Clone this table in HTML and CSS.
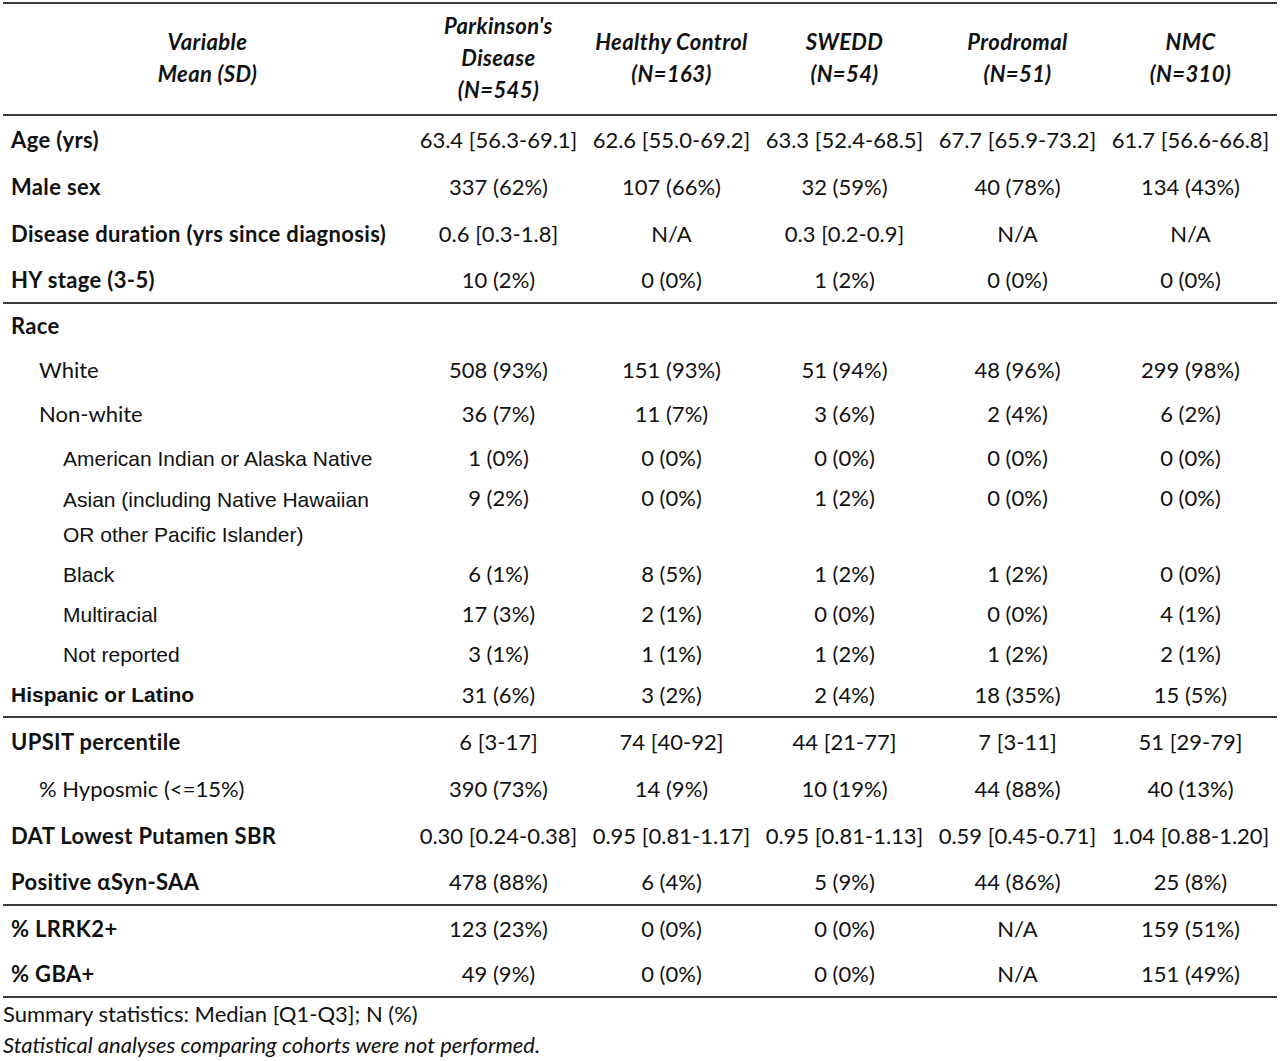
FILE: index.html
```html
<!DOCTYPE html>
<html lang="en">
<head>
    <meta charset="UTF-8">
    <meta name="viewport" content="width=device-width, initial-scale=1.0">
    <title>Cohort characteristics</title>
    <link rel="stylesheet" href="styles.css">
</head>
<body>

<table class="cohort-table">
    <colgroup>
        <col class="col-var">
        <col class="col-data">
        <col class="col-data">
        <col class="col-data">
        <col class="col-data">
        <col class="col-data">
    </colgroup>
    <thead>
        <tr>
            <th>Variable<br>Mean (SD)</th>
            <th>Parkinson's<br>Disease<br>(N=545)</th>
            <th>Healthy Control<br>(N=163)</th>
            <th>SWEDD<br>(N=54)</th>
            <th>Prodromal<br>(N=51)</th>
            <th>NMC<br>(N=310)</th>
        </tr>
    </thead>

    <tbody class="group">
        <tr class="main">
            <td class="label">Age (yrs)</td>
            <td>63.4 [56.3-69.1]</td><td>62.6 [55.0-69.2]</td><td>63.3 [52.4-68.5]</td><td>67.7 [65.9-73.2]</td><td>61.7 [56.6-66.8]</td>
        </tr>
        <tr class="main">
            <td class="label">Male sex</td>
            <td>337 (62%)</td><td>107 (66%)</td><td>32 (59%)</td><td>40 (78%)</td><td>134 (43%)</td>
        </tr>
        <tr class="main">
            <td class="label">Disease duration (yrs since diagnosis)</td>
            <td>0.6 [0.3-1.8]</td><td>N/A</td><td>0.3 [0.2-0.9]</td><td>N/A</td><td>N/A</td>
        </tr>
        <tr class="main last">
            <td class="label">HY stage (3-5)</td>
            <td>10 (2%)</td><td>0 (0%)</td><td>1 (2%)</td><td>0 (0%)</td><td>0 (0%)</td>
        </tr>
    </tbody>

    <tbody class="group">
        <tr class="race-head">
            <td class="label">Race</td>
            <td></td><td></td><td></td><td></td><td></td>
        </tr>
        <tr class="race-white">
            <td class="label indent">White</td>
            <td>508 (93%)</td><td>151 (93%)</td><td>51 (94%)</td><td>48 (96%)</td><td>299 (98%)</td>
        </tr>
        <tr class="race-nonwhite">
            <td class="label indent">Non-white</td>
            <td>36 (7%)</td><td>11 (7%)</td><td>3 (6%)</td><td>2 (4%)</td><td>6 (2%)</td>
        </tr>
        <tr class="sub sub-first">
            <td class="label arial indent-2">American Indian or Alaska Native</td>
            <td>1 (0%)</td><td>0 (0%)</td><td>0 (0%)</td><td>0 (0%)</td><td>0 (0%)</td>
        </tr>
        <tr class="sub sub-double">
            <td class="label arial indent-2">Asian (including Native Hawaiian<br>OR other Pacific Islander)</td>
            <td>9 (2%)</td><td>0 (0%)</td><td>1 (2%)</td><td>0 (0%)</td><td>0 (0%)</td>
        </tr>
        <tr class="sub">
            <td class="label arial indent-2">Black</td>
            <td>6 (1%)</td><td>8 (5%)</td><td>1 (2%)</td><td>1 (2%)</td><td>0 (0%)</td>
        </tr>
        <tr class="sub">
            <td class="label arial indent-2">Multiracial</td>
            <td>17 (3%)</td><td>2 (1%)</td><td>0 (0%)</td><td>0 (0%)</td><td>4 (1%)</td>
        </tr>
        <tr class="sub">
            <td class="label arial indent-2">Not reported</td>
            <td>3 (1%)</td><td>1 (1%)</td><td>1 (2%)</td><td>1 (2%)</td><td>2 (1%)</td>
        </tr>
        <tr class="hispanic">
            <td class="label arial">Hispanic or Latino</td>
            <td>31 (6%)</td><td>3 (2%)</td><td>2 (4%)</td><td>18 (35%)</td><td>15 (5%)</td>
        </tr>
    </tbody>

    <tbody class="group">
        <tr class="main">
            <td class="label">UPSIT percentile</td>
            <td>6 [3-17]</td><td>74 [40-92]</td><td>44 [21-77]</td><td>7 [3-11]</td><td>51 [29-79]</td>
        </tr>
        <tr class="main">
            <td class="label indent">% Hyposmic (&lt;=15%)</td>
            <td>390 (73%)</td><td>14 (9%)</td><td>10 (19%)</td><td>44 (88%)</td><td>40 (13%)</td>
        </tr>
        <tr class="main">
            <td class="label">DAT Lowest Putamen SBR</td>
            <td>0.30 [0.24-0.38]</td><td>0.95 [0.81-1.17]</td><td>0.95 [0.81-1.13]</td><td>0.59 [0.45-0.71]</td><td>1.04 [0.88-1.20]</td>
        </tr>
        <tr class="main last">
            <td class="label">Positive αSyn-SAA</td>
            <td>478 (88%)</td><td>6 (4%)</td><td>5 (9%)</td><td>44 (86%)</td><td>25 (8%)</td>
        </tr>
    </tbody>

    <tbody class="group">
        <tr class="gene">
            <td class="label">% LRRK2+</td>
            <td>123 (23%)</td><td>0 (0%)</td><td>0 (0%)</td><td>N/A</td><td>159 (51%)</td>
        </tr>
        <tr class="gene last">
            <td class="label">% GBA+</td>
            <td>49 (9%)</td><td>0 (0%)</td><td>0 (0%)</td><td>N/A</td><td>151 (49%)</td>
        </tr>
    </tbody>
</table>

<div class="notes">
    <p>Summary statistics: Median [Q1-Q3]; N (%)</p>
    <p class="note-italic">Statistical analyses comparing cohorts were not performed.</p>
</div>

</body>
</html>
```

FILE: styles.css
```css
body {
    margin: 0;
    padding: 2px 0 0 3px;
    background-color: #fff;
    color: #111;
    font-family: Lato, "Open Sans", sans-serif;
    font-size: 22px;
}

.cohort-table {
    border-collapse: collapse;
    table-layout: fixed;
    width: 1274px;
}

.col-var {
    width: 409px;
}

.col-data {
    width: 173px;
}

/* Kopf */
.cohort-table thead th {
    height: 108px;
    padding: 0 0 2px;
    border-top: 2px solid #3c3c3c;
    border-bottom: 2px solid #3c3c3c;
    font-style: italic;
    font-weight: 700;
    letter-spacing: 0.4px;
    line-height: 32px;
    text-align: center;
    vertical-align: middle;
}

.cohort-table td {
    padding: 0;
    text-align: center;
    vertical-align: middle;
    line-height: 30px;
    white-space: nowrap;
}

.group tr:last-child td {
    border-bottom: 2px solid #3c3c3c;
}

.cohort-table td.label {
    text-align: left;
    padding-left: 8px;
    font-weight: 700;
    letter-spacing: 0.35px;
}

.cohort-table td.indent {
    padding-left: 36px;
    font-weight: 400;
    letter-spacing: 0;
}

.cohort-table td.arial {
    font-family: "Liberation Sans", Arial, sans-serif;
    font-size: 21px;
    letter-spacing: 0;
}

.cohort-table td.indent-2 {
    padding-left: 60px;
    font-weight: 400;
    line-height: 35px;
}

/* Zeilenhöhen */
.main td {
    height: 47px;
}

.main.last td {
    height: 45px;
}

.race-head td {
    height: 44px;
}

.race-white td {
    height: 43px;
}

.race-nonwhite td {
    height: 46px;
}

.sub td {
    height: 40px;
}

.sub-first td {
    height: 42px;
}

.sub-double td {
    height: 75px;
}

.sub-double td:not(.label) {
    height: 71px;
    vertical-align: top;
    padding-top: 4px;
}

.hispanic td {
    height: 42px;
}

.gene td {
    height: 46px;
}

.gene.last td {
    height: 44px;
}

.notes p {
    margin: 0;
    line-height: 31px;
}

.note-italic {
    font-style: italic;
}
```
